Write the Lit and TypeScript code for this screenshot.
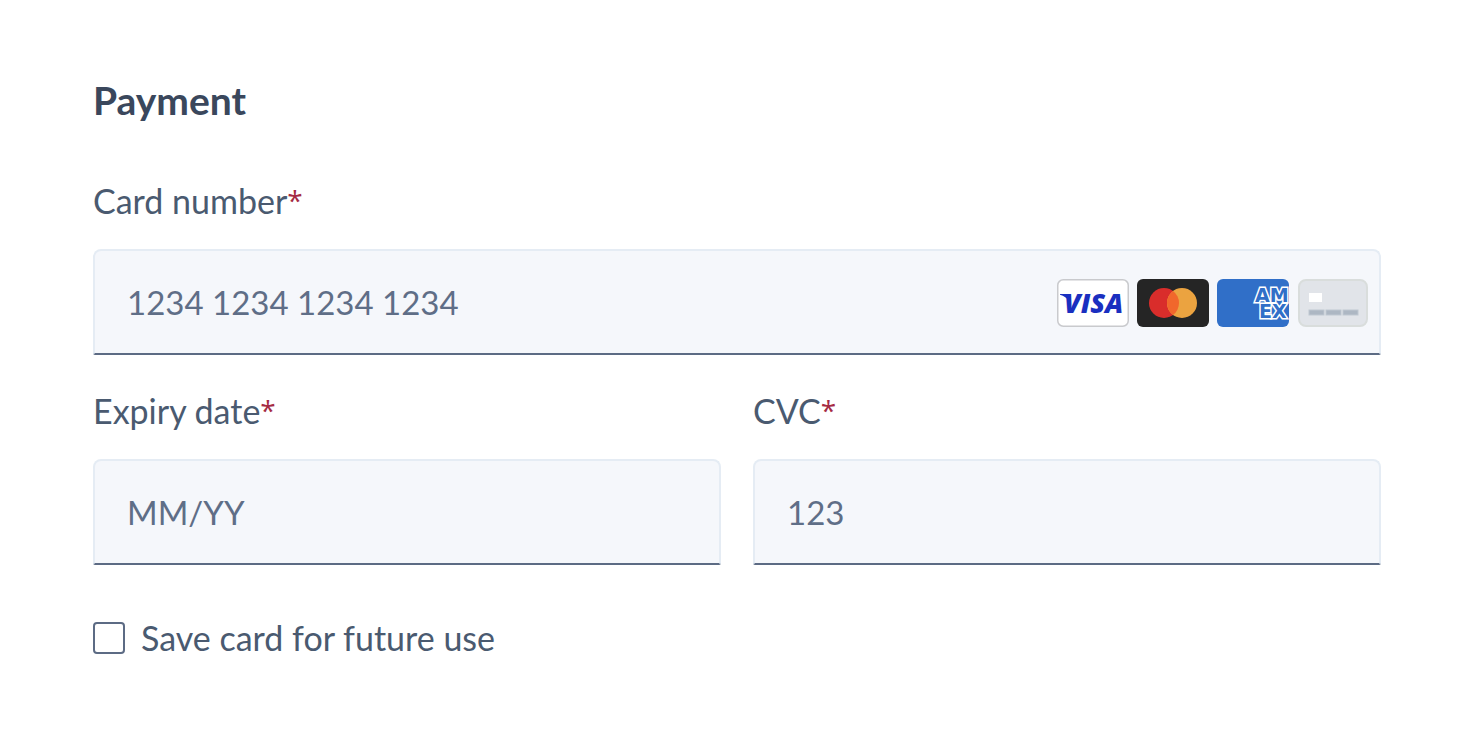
import { LitElement, html, css, svg } from "lit";
import { customElement, property } from "lit/decorators.js";

@customElement("card-brands")
class CardBrands extends LitElement {
  static styles = css`
    :host {
      display: flex;
      align-items: center;
      gap: 8px;
      padding-top: 2px;
    }
    .brand {
      display: block;
      width: 72px;
      height: 48px;
    }
    .visa {
      font: italic 800 27px "Open Sans", sans-serif;
      fill: #1a2fc0;
    }
    .amex {
      font: 700 19px "DejaVu Sans", sans-serif;
      fill: #306fc8;
      stroke: #ffffff;
      stroke-width: 3px;
      paint-order: stroke;
    }
  `;

  render() {
    return html`
      <svg class="brand" viewBox="0 0 72 48" role="img" aria-label="Visa">
        <rect x="0.75" y="0.75" width="70.5" height="46.5" rx="5.5" fill="#fff" stroke="#c9cacd" stroke-width="1.5" />
        <path d="M3 15h9l2 5-2 2c-2-3-5-5-9-6.300z" fill="#1a2fc0" />
        <text class="visa" x="7" y="34">VISA</text>
      </svg>
      <svg class="brand" viewBox="0 0 72 48" role="img" aria-label="Mastercard">
        <rect width="72" height="48" rx="6" fill="#252525" />
        <circle cx="27" cy="24" r="15" fill="#d92d2b" />
        <circle cx="45" cy="24" r="15" fill="#eba340" />
        <path d="M36 12a15 15 0 0 1 0 24a15 15 0 0 1 0-24z" fill="#f1672c" />
      </svg>
      <svg class="brand" viewBox="0 0 72 48" role="img" aria-label="American Express">
        <defs><clipPath id="card"><rect width="72" height="48" rx="6" /></clipPath></defs>
        <g clip-path="url(#card)">
          <rect width="72" height="48" fill="#306fc8" />
          <text class="amex"><tspan x="38" y="23">AM</tspan><tspan x="42" y="39">EX</tspan></text>
        </g>
      </svg>
      <svg class="brand" viewBox="0 0 72 48" role="img" aria-label="Other card">
        <rect x="2" y="1" width="68" height="46" rx="7" fill="#e1e4e9" stroke="#d9dddc" stroke-width="2" />
        <rect x="12" y="14" width="13" height="9" fill="#fff" />
        ${[12, 29, 46].map(
          (x) => svg`<rect x=${x} y="31" width="15" height="5" fill="#adb7c3" stroke="#bfc7d1" />`
        )}
      </svg>
    `;
  }
}

@customElement("text-field")
class TextField extends LitElement {
  @property() label = "";
  @property() placeholder = "";
  @property() autofill = "";

  static styles = css`
    :host {
      display: block;
      min-width: 0;
    }
    .label {
      display: block;
      margin-bottom: 28px;
      font-size: 34px;
      line-height: 40px;
      color: #4a5a70;
    }
    .star {
      font-family: "Open Sans", sans-serif;
      font-size: 28px;
      line-height: 1;
      vertical-align: 3px;
      color: #a52a43;
    }
    .box {
      display: flex;
      align-items: center;
      padding-right: 10px;
      border: 2px solid #e5ecf4;
      border-bottom-color: #5c6b84;
      border-radius: 8px 8px 2px 2px;
      background: #f5f7fb;
    }
    .input {
      flex: 1;
      min-width: 0;
      box-sizing: border-box;
      height: 102px;
      padding: 0 32px;
      border: 0;
      outline: 0;
      background: none;
      font: 400 33px Lato, sans-serif;
      color: #4a5a70;
    }
    .input::placeholder {
      color: #5f6e87;
      opacity: 1;
    }
    .box:focus-within {
      border-color: #5c6b84;
    }
  `;

  render() {
    return html`
      <label class="label" for="input">${this.label}<span class="star">*</span></label>
      <div class="box">
        <input
          class="input"
          id="input"
          type="text"
          inputmode="numeric"
          required
          autocomplete=${this.autofill}
          placeholder=${this.placeholder}
        />
        <slot></slot>
      </div>
    `;
  }
}

@customElement("app-root")
class AppRoot extends LitElement {
  static styles = css`
    :host {
      display: block;
      box-sizing: border-box;
      min-height: 100vh;
      padding: 76px 91px 76px 93px;
      background: #ffffff;
      font-family: Lato, sans-serif;
      color: #4a5a70;
    }
    .title {
      margin: 0 0 57px;
      font-size: 39px;
      line-height: 48px;
      font-weight: 700;
      color: #3a475c;
    }
    .form {
      display: grid;
      grid-template-columns: 1fr 1fr;
      gap: 36px 32px;
    }
    .wide {
      grid-column: 1 / -1;
    }
    .save {
      display: flex;
      align-items: center;
      gap: 16px;
      margin-top: 53px;
      font-size: 34px;
      line-height: 40px;
    }
    .check {
      appearance: none;
      flex: none;
      width: 32px;
      height: 32px;
      margin: 0;
      border: 2px solid #5c6b84;
      border-radius: 4px;
      background: #ffffff;
    }
    .check:checked {
      background: #5c6b84;
      box-shadow: inset 0 0 0 4px #ffffff;
    }
  `;

  render() {
    return html`
      <h1 class="title">Payment</h1>
      <form class="form">
        <text-field class="wide" label="Card number" placeholder="1234 1234 1234 1234" autofill="cc-number">
          <card-brands></card-brands>
        </text-field>
        <text-field label="Expiry date" placeholder="MM/YY" autofill="cc-exp"></text-field>
        <text-field label="CVC" placeholder="123" autofill="cc-csc"></text-field>
      </form>
      <label class="save"><input class="check" type="checkbox" />Save card for future use</label>
    `;
  }
}
